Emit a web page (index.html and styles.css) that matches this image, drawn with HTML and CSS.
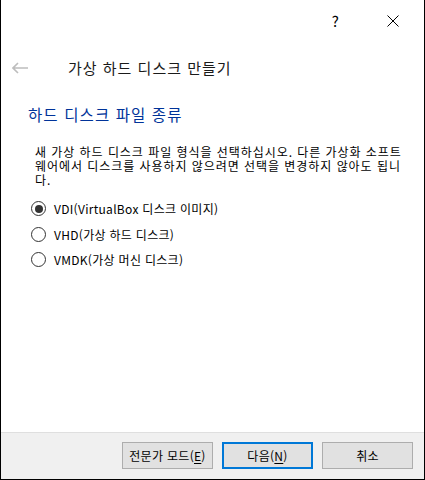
FILE: index.html
```html
<!DOCTYPE html>
<html lang="ko">
<head>
  <meta charset="UTF-8">
  <meta name="viewport" content="width=device-width, initial-scale=1.0">
  <title>가상 하드 디스크 만들기</title>
  <link rel="stylesheet" href="styles.css">
</head>
<body>
  <div class="window">
    <div class="titlebar">
      <span class="help">?</span>
      <svg class="close" width="12" height="12" viewBox="0 0 12 12">
        <path d="M0.5 0.5 L11.5 11.5 M11.5 0.5 L0.5 11.5" stroke="#000" stroke-width="1" fill="none"/>
      </svg>
    </div>

    <div class="wizard-header">
      <svg class="back" width="16" height="12" viewBox="0 0 16 12">
        <path d="M1 6 H16 M6 1 L1 6 L6 11" stroke="#bdbdbd" stroke-width="1.6" fill="none"/>
      </svg>
      <h1 class="wizard-title">가상 하드 디스크 만들기</h1>
    </div>

    <main class="page">
      <h2 class="page-title">하드 디스크 파일 종류</h2>
      <p class="description">새 가상 하드 디스크 파일 형식을 선택하십시오. 다른 가상화 소프트웨어에서 디스크를 사용하지 않으려면 선택을 변경하지 않아도 됩니다.</p>

      <div class="options">
        <label class="option">
          <span class="radio checked"></span>
          <span>VDI(VirtualBox 디스크 이미지)</span>
        </label>
        <label class="option">
          <span class="radio"></span>
          <span>VHD(가상 하드 디스크)</span>
        </label>
        <label class="option">
          <span class="radio"></span>
          <span>VMDK(가상 머신 디스크)</span>
        </label>
      </div>
    </main>

    <footer class="footer">
      <button class="button">전문가 모드(<u>E</u>)</button>
      <button class="button default">다음(<u>N</u>)</button>
      <button class="button">취소</button>
    </footer>
  </div>
</body>
</html>
```

FILE: styles.css
```css
* {
  box-sizing: border-box;
  font-family: "Noto Sans CJK KR", "Noto Sans", sans-serif;
}

body {
  margin: 0;
  background: #fff;
}

.window {
  width: 425px;
  height: 480px;
  display: flex;
  flex-direction: column;
  background: #fff;
  border-left: 1px solid #000;
  border-right: 1px solid #000;
  border-bottom: 1px solid #000;
}

.titlebar {
  height: 42px;
  display: flex;
  align-items: center;
  justify-content: flex-end;
  padding-right: 25px;
}

.help {
  font-size: 15px;
  line-height: 16px;
  color: #000;
  margin-right: 48px;
}

.wizard-header {
  height: 52px;
  display: flex;
  align-items: center;
  padding-left: 11px;
}

.wizard-title {
  margin: 0 0 0 40px;
  font-size: 15px;
  font-weight: normal;
  line-height: 20px;
  letter-spacing: 1px;
  color: #1a1a1a;
}

.page {
  flex: 1;
  padding-left: 27px;
}

.page-title {
  margin: 10px 0 0;
  font-size: 15.5px;
  font-weight: normal;
  line-height: 20px;
  letter-spacing: 1.1px;
  color: #003399;
}

.description {
  width: 367px;
  margin: 21px 0 0 7px;
  font-size: 12px;
  line-height: 14px;
  letter-spacing: 0.95px;
  color: #000;
}

.options {
  margin-top: 9px;
  padding-left: 3px;
}

.option {
  height: 25.5px;
  display: flex;
  align-items: center;
  gap: 8px;
  font-size: 12px;
  letter-spacing: 0.3px;
  color: #000;
}

.radio {
  width: 15px;
  height: 15px;
  border: 1px solid #333;
  border-radius: 50%;
  display: flex;
  align-items: center;
  justify-content: center;
}

.radio.checked::after {
  content: "";
  width: 8px;
  height: 8px;
  border-radius: 50%;
  background: #333;
}

.footer {
  height: 47px;
  display: flex;
  justify-content: flex-end;
  align-items: flex-start;
  gap: 9px;
  padding: 9px 11px 0 0;
  background: #f0f0f0;
  border-top: 1px solid #dfdfdf;
}

.button {
  width: 91px;
  height: 27px;
  padding: 0;
  font-size: 12px;
  letter-spacing: 0.3px;
  color: #000;
  background: #e1e1e1;
  border: 1px solid #adadad;
}

.button.default {
  border: 2px solid #0078d7;
}

.button u {
  text-underline-offset: 2px;
}
```
